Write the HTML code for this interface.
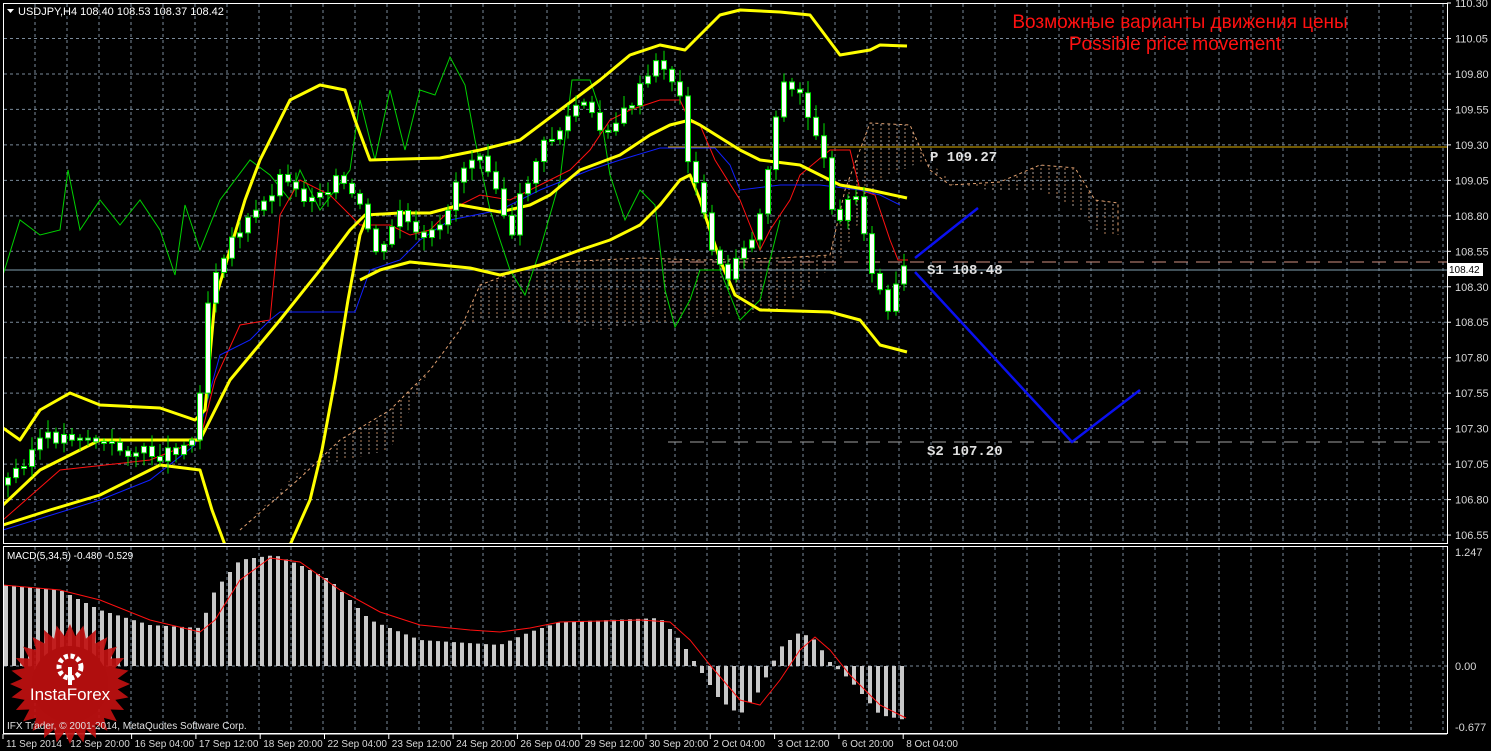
<!DOCTYPE html>
<html><head><meta charset="utf-8"><style>
body{margin:0;background:#000;width:1491px;height:751px;overflow:hidden;font-family:"Liberation Sans",sans-serif}
svg{position:absolute;left:0;top:0}
</style></head><body>
<svg id="s" width="1491" height="751" xmlns="http://www.w3.org/2000/svg">
<defs>
<pattern id="hatch" width="8" height="8" patternUnits="userSpaceOnUse"><line x1="1" y1="0" x2="1" y2="2" stroke="#e0a070" stroke-width="1"/><line x1="1" y1="4" x2="1" y2="6" stroke="#d8c8c0" stroke-width="1"/></pattern>
<clipPath id="main"><rect x="4" y="4" width="1443" height="539"/></clipPath>
<clipPath id="mac"><rect x="4" y="547" width="1443" height="186"/></clipPath>
</defs>
<g id="grid"></g>
<g clip-path="url(#main)">
<polygon fill="url(#hatch)" opacity="0.8" points="240,530 300,478 340,440 390,410 430,370 460,330 480,285 520,270 560,262 640,258 700,260 780,258 830,255 845,190 870,123 910,125 930,170 950,185 1000,182 1040,165 1075,168 1095,200 1118,203 1118,235 1100,235 1080,210 1040,190 1000,192 960,185 925,160 880,180 840,260 780,310 680,320 600,330 560,320 480,320 460,330 430,370 390,450 300,470 240,530"/>
<polyline fill="none" stroke="#e0a070" stroke-dasharray="3,3" points="240,530 300,478 340,440 390,410 430,370 460,330 480,285 520,270 560,262 640,258 700,260 780,258 830,255 845,190 870,123 910,125 930,170 950,185 1000,182 1040,165 1075,168 1095,200 1118,203 1118,235"/>
<line x1="3" y1="270" x2="1447" y2="270" stroke="#7f9fb0" stroke-width="1"/>
<line x1="668" y1="147" x2="1447" y2="147" stroke="#e0b000" stroke-width="1"/>
<line x1="668" y1="262" x2="1447" y2="262" stroke="#d09080" stroke-dasharray="14,8"/>
<line x1="668" y1="442" x2="1447" y2="442" stroke="#a0a0a0" stroke-dasharray="14,8"/>
<polyline fill="none" stroke="#00d000" stroke-width="1" points="3,275 20,220 40,235 60,230 68,170 80,230 100,200 120,225 140,200 160,230 175,275 185,205 200,250 220,200 250,160 270,175 290,200 300,170 320,210 350,170 360,100 375,160 390,90 405,150 420,90 435,95 450,57 465,85 475,140 490,210 510,270 525,295 540,250 560,180 572,80 590,80 600,110 610,175 625,220 640,190 655,205 665,290 675,327 690,300 700,270 720,270 740,320 760,300 780,220"/>
<polyline fill="none" stroke="#ff1010" stroke-width="1" points="3,520 60,470 150,460 200,440 215,380 240,325 270,320 280,215 300,180 330,195 360,225 390,225 410,235 430,230 450,210 480,195 510,200 540,185 570,170 590,150 610,120 630,110 660,100 680,100 690,122 700,125 715,160 740,200 760,250 770,230 790,200 800,175 830,150 850,150 860,190 875,195 890,240 898,260 908,260"/>
<polyline fill="none" stroke="#1020ff" stroke-width="1" points="3,530 100,500 150,480 195,445 220,355 250,340 270,320 280,312 355,312 370,270 400,260 420,240 450,220 500,210 540,190 590,170 620,160 660,148 715,148 730,165 740,190 780,185 820,185 860,190 880,195 900,205"/>
<g fill="none" stroke="#ffff00" stroke-width="3" stroke-linejoin="round">
<polyline points="3,428 20,440 40,410 70,393 100,405 160,408 195,420 205,410 215,300 245,200 260,160 290,100 320,85 345,90 355,120 370,160 440,158 480,150 520,140 560,110 600,80 630,55 660,45 685,50 700,35 720,15 740,10 780,12 810,15 840,55 870,50 880,45 907,46"/>
<polyline points="3,505 40,470 100,440 160,440 200,440 230,380 280,320 320,270 350,230 365,215 400,213 430,213 460,205 500,212 530,205 550,195 580,170 620,155 650,135 670,125 690,120 700,125 740,150 760,160 800,165 840,185 870,190 907,198"/>
<polyline points="3,525 50,510 100,495 140,475 160,465 200,470 212,510 225,545"/>
<polyline points="290,545 310,500 322,450 335,380 348,300 360,235 368,215"/>
<polyline points="360,280 380,270 410,262 440,265 470,268 500,275 540,265 580,250 610,240 640,225 660,205 680,180 690,175 700,200 720,260 735,295 760,310 830,312 860,320 880,345 907,352"/>
</g>
<g id="candles"></g>
<g stroke="#0a10f0" stroke-width="2.5" fill="none">
<line x1="915" y1="258" x2="978" y2="208"/>
<polyline points="915,272 1072,442 1140,390"/>
</g>
</g>
<g clip-path="url(#mac)"><g id="hist"></g>
<polyline id="sig" fill="none" stroke="#ff1010" stroke-width="1"/></g>
<g fill="none" stroke="#ffffff" stroke-width="1">
<rect x="3.5" y="3.5" width="1444" height="540"/>
<rect x="3.5" y="546.5" width="1444" height="187"/>
</g>
<g fill="#d8d8d8" font-size="11" font-family="Liberation Sans,sans-serif" id="lbl"></g>
<text x="1180" y="28" fill="#ff1010" font-size="19" text-anchor="middle">Возможные варианты движения цены</text>
<text x="1175" y="50" fill="#ff1010" font-size="19" text-anchor="middle">Possible price movement</text>
<text x="930" y="161" fill="#e0e0e0" font-size="14" font-family="Liberation Mono,monospace" font-weight="bold">P 109.27</text>
<text x="927" y="274" fill="#e0e0e0" font-size="14" font-family="Liberation Mono,monospace" font-weight="bold">S1 108.48</text>
<text x="927" y="455" fill="#e0e0e0" font-size="14" font-family="Liberation Mono,monospace" font-weight="bold">S2 107.20</text>
<path d="M7,9 L14,9 L10.5,13Z" fill="#fff"/>
<text x="18" y="15" fill="#fff" font-size="11">USDJPY,H4  108.40 108.53 108.37 108.42</text>
<text x="7" y="559" fill="#fff" font-size="10">MACD(5,34,5) -0.480 -0.529</text>
<rect x="1447" y="263" width="36" height="13" fill="#fff"/>
<text x="1449" y="273" fill="#000" font-size="10">108.42</text>
<g transform="translate(70,684)">
<polygon id="star" fill="#c01010" opacity="0.92"/>
<circle r="38" fill="#b00e0e"/>
<circle cx="0" cy="-17" r="11" fill="none" stroke="#fff" stroke-width="5" stroke-dasharray="4,2.5"/>
<rect x="-2" y="-17" width="4" height="18" fill="#fff"/>
<text x="0" y="16" fill="#fff" font-size="17" text-anchor="middle">InstaForex</text>
</g>
<text x="7" y="729" fill="#e0e0e0" font-size="10">IFX Trader, © 2001-2014, MetaQuotes Software Corp.</text>
</svg>
<script>
(function(){
var NS="http://www.w3.org/2000/svg";
function el(p,t,a){var e=document.createElementNS(NS,t);for(var k in a)e.setAttribute(k,a[k]);p.appendChild(e);return e;}
var g=document.getElementById('grid');
for(var x=35;x<1447;x+=32){el(g,'line',{x1:x,y1:4,x2:x,y2:543,stroke:'#7a8a9a','stroke-dasharray':'3,3'});el(g,'line',{x1:x,y1:547,x2:x,y2:733,stroke:'#7a8a9a','stroke-dasharray':'3,3'});}
var L=document.getElementById('lbl');
var pr=["110.30","110.05","109.80","109.55","109.30","109.05","108.80","108.55","108.30","108.05","107.80","107.55","107.30","107.05","106.80","106.55"];
for(var i=0;i<16;i++){var y=3+i*35.47;if(i>0)el(g,'line',{x1:4,y1:y,x2:1447,y2:y,stroke:'#7a8a9a','stroke-dasharray':'3,3'});el(L,'line',{x1:1447,y1:y,x2:1451,y2:y,stroke:'#fff'});var t=el(L,'text',{x:1455,y:y+4});t.textContent=pr[i];}
el(g,'line',{x1:4,y1:666,x2:1447,y2:666,stroke:'#7a8a9a','stroke-dasharray':'3,3'});
[["1.247",556],["0.00",670],["-0.677",731]].forEach(function(a){var t=el(L,'text',{x:1455,y:a[1]});t.textContent=a[0];});
var d=["11 Sep 2014","12 Sep 20:00","16 Sep 04:00","17 Sep 12:00","18 Sep 20:00","22 Sep 04:00","23 Sep 12:00","24 Sep 20:00","26 Sep 04:00","29 Sep 12:00","30 Sep 20:00","2 Oct 04:00","3 Oct 12:00","6 Oct 20:00","8 Oct 04:00"];
for(var i=0;i<d.length;i++){var x=3+i*64.3;el(L,'line',{x1:x,y1:734,x2:x,y2:739,stroke:'#fff'});var t=el(L,'text',{x:x+3,y:747,'font-size':'10'});t.textContent=d[i];}
el(L,'line',{x1:3,y1:734,x2:1447,y2:734,stroke:'#fff'});
var P=[[8,480],[40,440],[80,435],[120,450],[160,455],[195,440],[210,280],[230,240],[260,210],[285,170],[300,200],[320,190],[340,180],[360,210],[380,260],[400,210],[420,245],[440,230],[460,170],[480,150],[500,190],[510,250],[520,200],[540,150],[560,130],[580,100],[600,130],[620,120],[640,90],[660,60],[670,75],[680,100],[690,170],[700,200],[710,240],[720,270],[730,280],[740,240],[750,250],[760,210],[770,160],[780,80],[790,90],[800,95],[810,120],[820,140],[830,200],[840,215],[850,200],[860,195],[870,275],[880,290],[890,320],[900,270],[907,270]];
function f(x){for(var i=1;i<P.length;i++)if(x<=P[i][0]){var a=P[i-1],b=P[i];return a[1]+(b[1]-a[1])*(x-a[0])/(b[0]-a[0]);}return 270;}
var C=document.getElementById('candles'),prev=485,seed=3;
function rnd(){seed=(seed*9301+49297)%233280;return seed/233280;}
for(var x=8;x<=906;x+=8){var c=f(x)+(rnd()-0.5)*14;var tp=Math.min(prev,c),bt=Math.max(prev,c);if(bt-tp<2)bt=tp+2;
el(C,'line',{x1:x,y1:tp-3-rnd()*10,x2:x,y2:bt+3+rnd()*10,stroke:'#00e000'});
el(C,'rect',{x:x-2.5,y:tp,width:5,height:bt-tp,fill:'#fff',stroke:'#00e000','stroke-width':1});prev=c;}
var H=[[5,585],[60,590],[100,610],[150,625],[200,628],[215,590],[240,560],[275,555],[300,565],[330,580],[370,620],[420,640],[500,645],[530,632],[560,622],[660,618],[680,640],[700,670],[720,700],[740,715],[760,690],[780,648],[800,632],[815,640],[830,662],[850,680],[880,715],[906,720]];
function h(x){for(var i=1;i<H.length;i++)if(x<=H[i][0]){var a=H[i-1],b=H[i];return a[1]+(b[1]-a[1])*(x-a[0])/(b[0]-a[0]);}return 700;}
var HG=document.getElementById('hist');
for(var x=6;x<=906;x+=8){var y=h(x);el(HG,'rect',{x:x-2,y:Math.min(y,666),width:4,height:Math.abs(666-y),fill:'#c8c8c8'});}
document.getElementById('sig').setAttribute('points',"3,585 60,590 100,600 150,620 200,632 215,620 240,580 270,558 300,562 340,590 380,612 420,625 470,630 500,632 530,628 560,622 640,620 670,622 690,640 710,665 740,700 760,705 780,680 800,650 815,637 830,650 850,675 880,705 906,718");
var s=document.getElementById('star'),pts=[];for(var i=0;i<56;i++){var r=i%2?48:60,a=i*Math.PI/28;pts.push((r*Math.cos(a)).toFixed(1)+','+(r*Math.sin(a)).toFixed(1));}s.setAttribute('points',pts.join(' '));
})();
</script>
</body></html>
